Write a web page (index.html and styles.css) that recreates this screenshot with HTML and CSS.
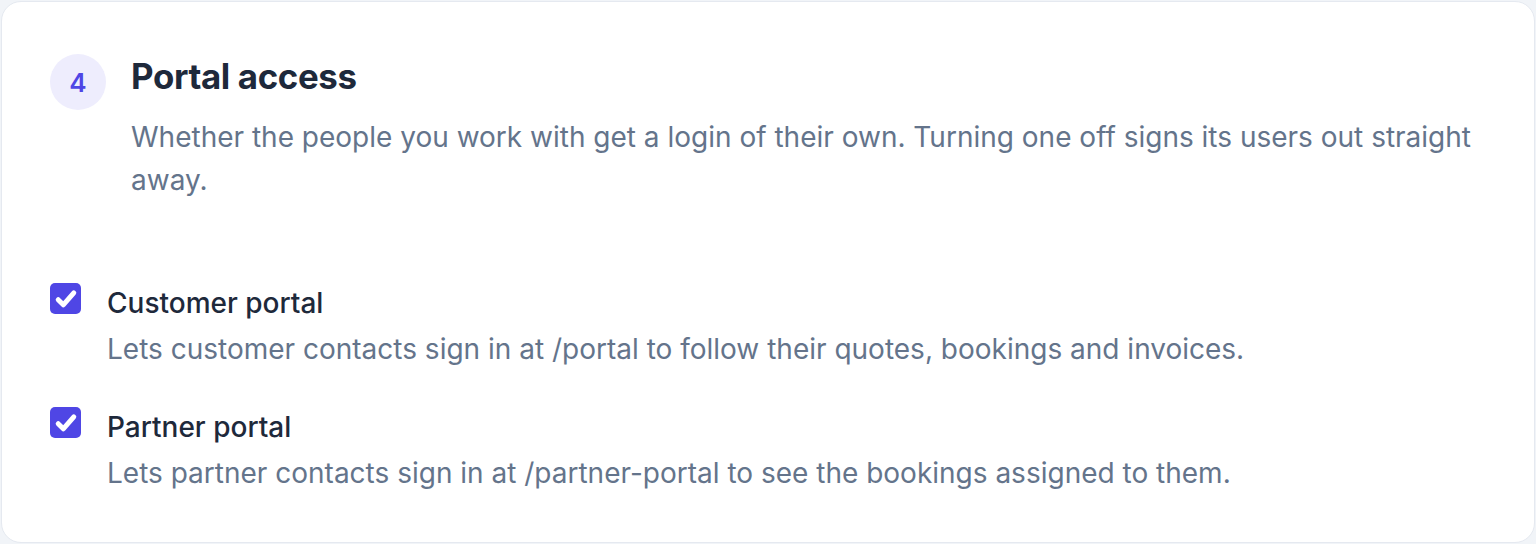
FILE: index.html
```html
<!DOCTYPE html>
<html lang="en">
<head>
<meta charset="utf-8">
<title>Portal access</title>
<link rel="stylesheet" href="styles.css">
</head>
<body>
<section class="card">
  <header class="step">
    <div class="step-num">4</div>
    <div class="step-text">
      <h2 class="step-title">Portal access</h2>
      <p class="step-desc">Whether the people you work with get a login of their own. Turning one off signs its users out straight away.</p>
    </div>
  </header>
  <div class="options">
    <label class="option">
      <span class="check"><svg viewBox="0 0 20 20" width="30" height="30"><path d="M4.8 10.5l3.4 3.4 7-8" fill="none" stroke="#fff" stroke-width="3.3" stroke-linecap="round" stroke-linejoin="round"/></svg></span>
      <span class="option-body">
        <span class="option-title">Customer portal</span>
        <span class="option-desc">Lets customer contacts sign in at /portal to follow their quotes, bookings and invoices.</span>
      </span>
    </label>
    <label class="option">
      <span class="check"><svg viewBox="0 0 20 20" width="30" height="30"><path d="M4.8 10.5l3.4 3.4 7-8" fill="none" stroke="#fff" stroke-width="3.3" stroke-linecap="round" stroke-linejoin="round"/></svg></span>
      <span class="option-body">
        <span class="option-title">Partner portal</span>
        <span class="option-desc">Lets partner contacts sign in at /partner-portal to see the bookings assigned to them.</span>
      </span>
    </label>
  </div>
</section>
</body>
</html>
```

FILE: styles.css
```css
* { box-sizing: border-box; }
html, body { margin: 0; }
body {
  background: #f1f4f8;
  padding: 1px;
  font-family: Inter, "Noto Sans", sans-serif;
}
.card {
  background: #fff;
  border: 1px solid #e5e9f0;
  border-radius: 20px;
  padding: 52px 48px 48px;
  height: 542px;
}
.step {
  display: flex;
  gap: 25px;
  align-items: flex-start;
}
.step-num {
  flex: none;
  width: 56px;
  height: 56px;
  border-radius: 50%;
  background: #eeedfd;
  color: #4f46e5;
  display: flex;
  align-items: center;
  justify-content: center;
  font-size: 26px;
  font-weight: 600;
}
.step-title {
  margin: 0;
  font-size: 34.8px;
  line-height: 44px;
  font-weight: 700;
  color: #1e293b;
  letter-spacing: -0.01em;
}
.step-desc {
  margin: 18px 0 0;
  font-size: 28px;
  line-height: 43px;
  color: #64748b;
}
.options {
  margin-top: 81px;
  display: flex;
  flex-direction: column;
  gap: 38px;
}
.option {
  display: flex;
  gap: 26px;
  align-items: flex-start;
}
.check {
  flex: none;
  width: 31px;
  height: 31px;
  border-radius: 5px;
  background: #4f46e5;
  display: flex;
  align-items: center;
  justify-content: center;
}
.option-body {
  display: flex;
  flex-direction: column;
  gap: 6px;
}
.option-title {
  font-size: 28px;
  line-height: 40px;
  font-weight: 500;
  color: #1e293b;
}
.option-desc {
  font-size: 28px;
  line-height: 40px;
  color: #64748b;
}
```
